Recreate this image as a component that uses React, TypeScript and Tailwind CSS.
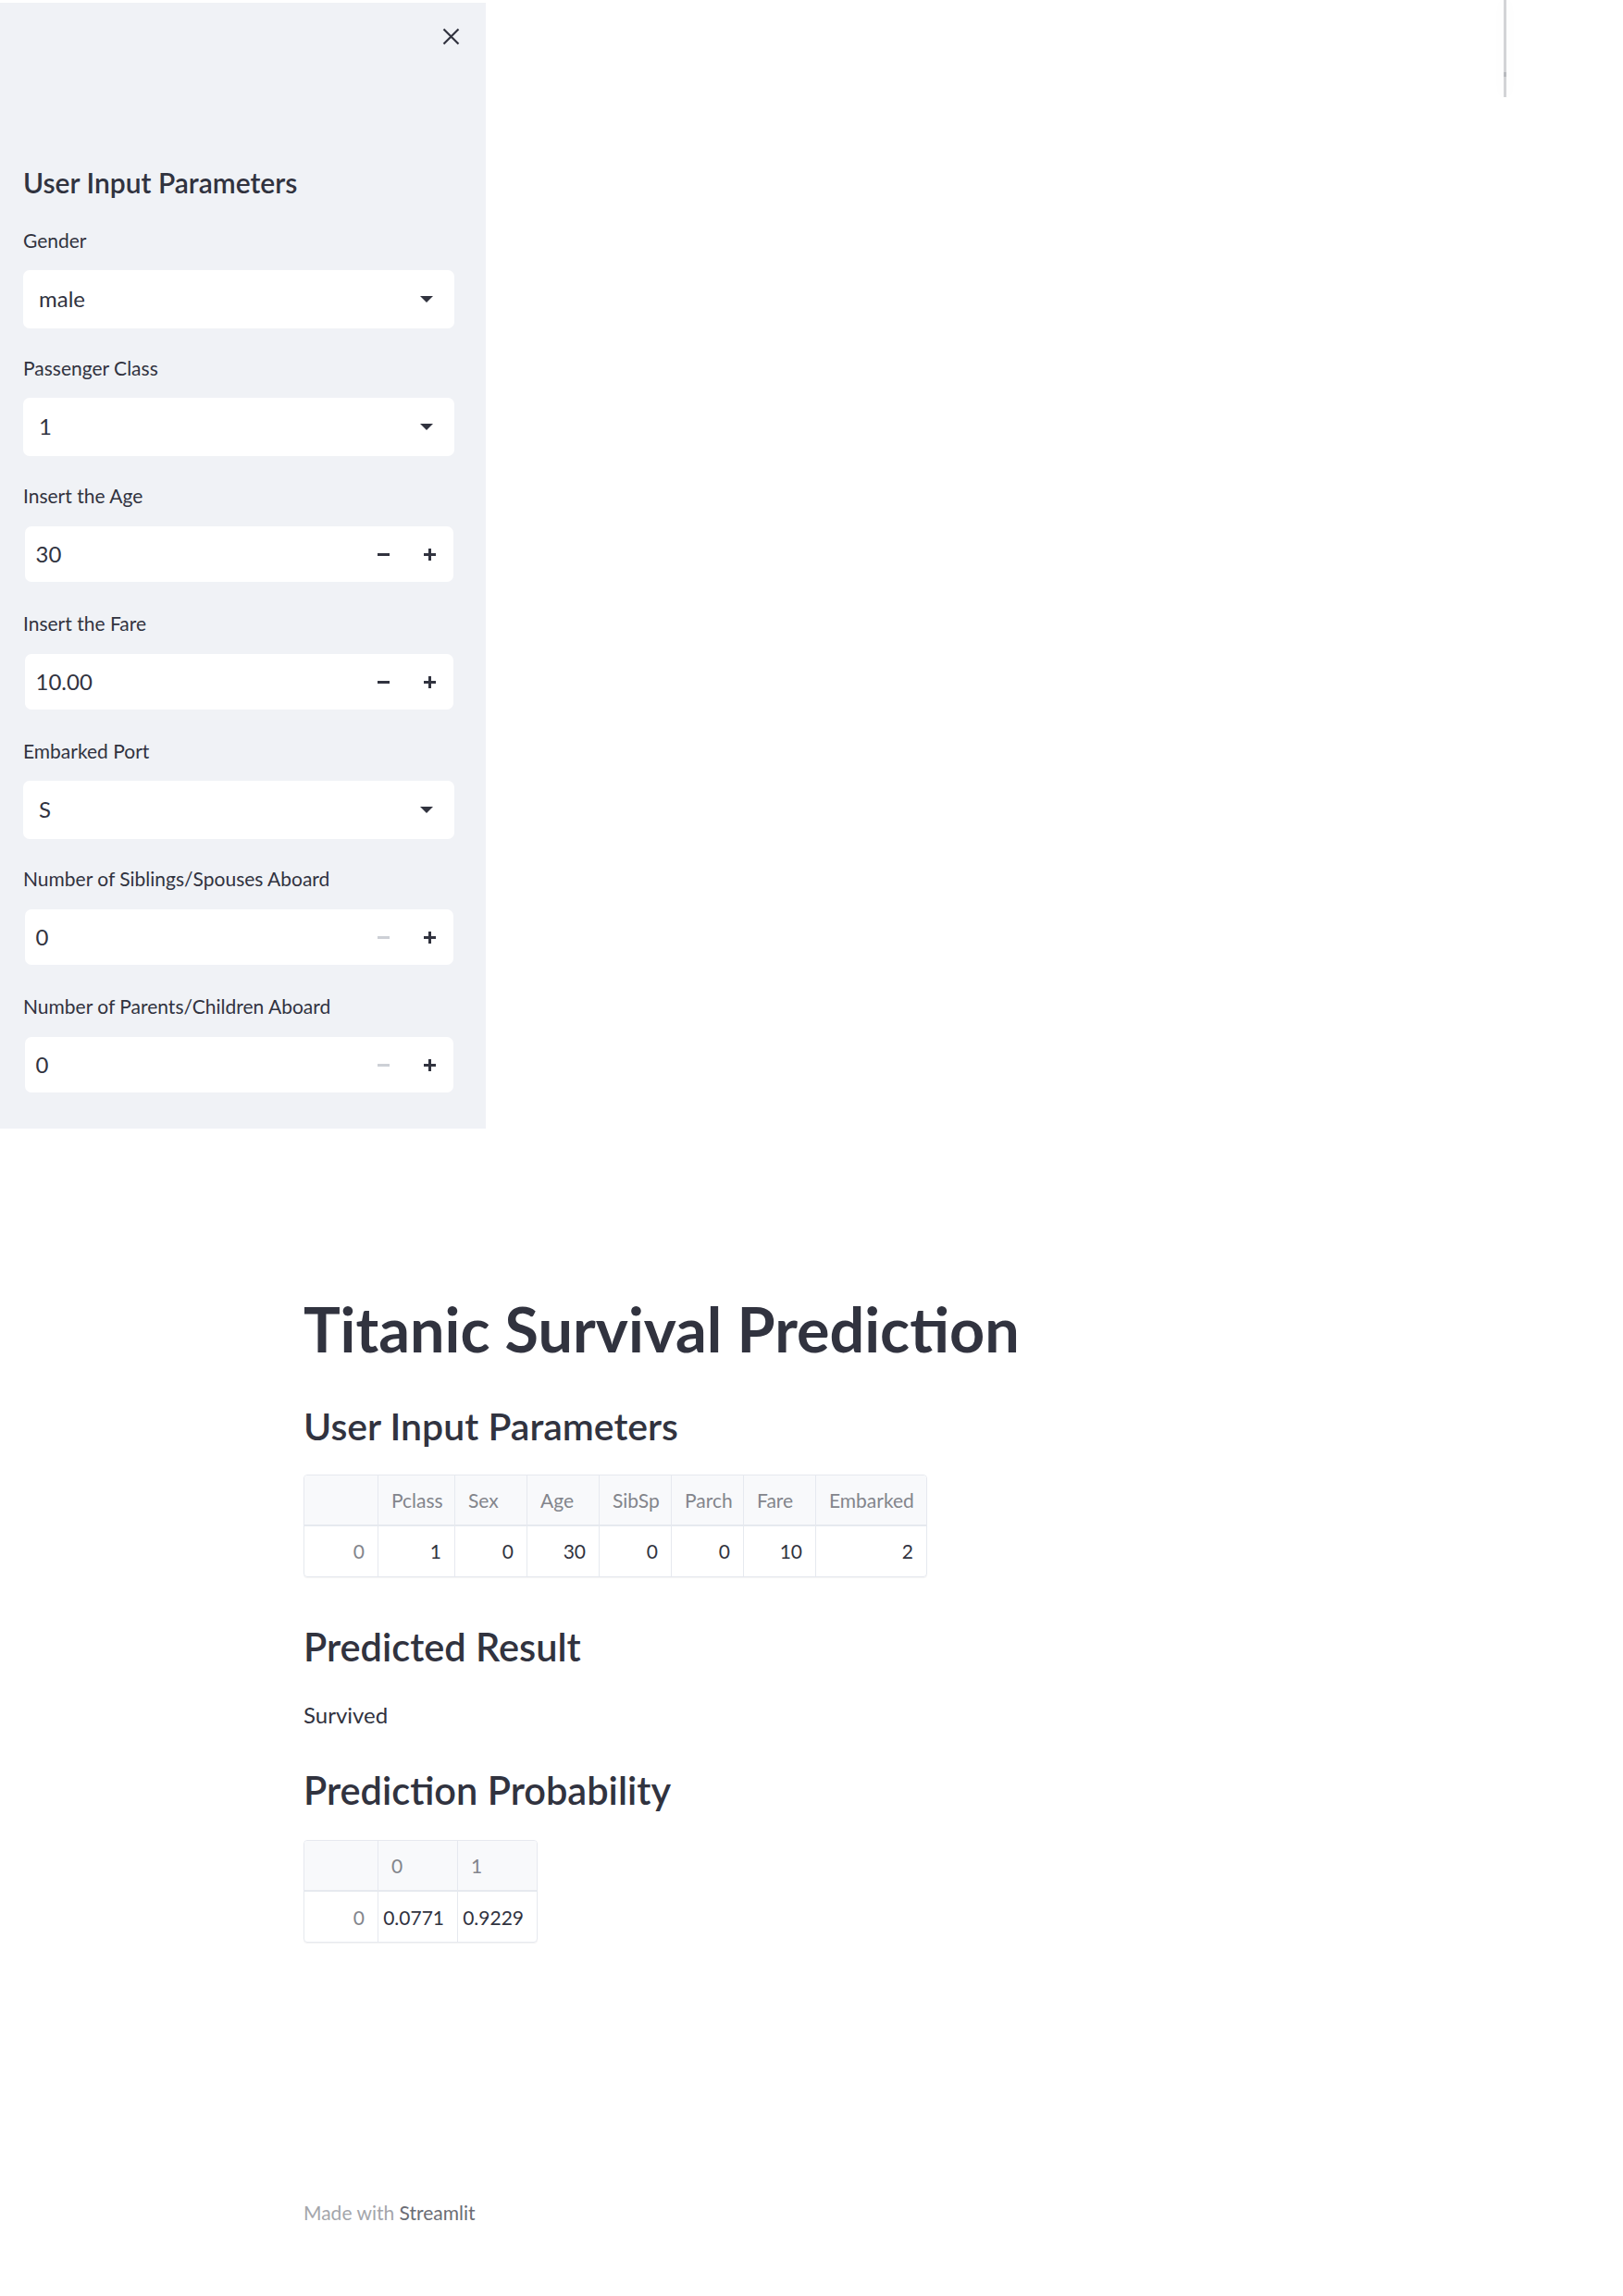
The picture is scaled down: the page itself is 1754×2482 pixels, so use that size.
import React from "react";

function CloseIcon() {
  return (
    <svg width="19" height="19" viewBox="0 0 19 19" fill="none">
      <path d="M1.5 1.5L17.5 17.5M17.5 1.5L1.5 17.5" stroke="#31333f" strokeWidth="2.2" />
    </svg>
  );
}

function Caret() {
  return (
    <svg width="14" height="7" viewBox="0 0 14 7">
      <path d="M0 0H14L7 7Z" fill="#31333f" />
    </svg>
  );
}

function Minus({ disabled }: { disabled?: boolean }) {
  return (
    <svg width="13" height="13" viewBox="0 0 13 13">
      <rect x="0" y="5" width="13" height="3" fill={disabled ? "#cdd0d6" : "#31333f"} />
    </svg>
  );
}

function Plus() {
  return (
    <svg width="13" height="13" viewBox="0 0 13 13">
      <rect x="0" y="5" width="13" height="3" fill="#31333f" />
      <rect x="5" y="0" width="3" height="13" fill="#31333f" />
    </svg>
  );
}

function Label({ children }: { children: React.ReactNode }) {
  return <div className="text-[21px] leading-[1.2] h-[25px] whitespace-nowrap">{children}</div>;
}

function SelectField({ label, value }: { label: string; value: string }) {
  return (
    <div className="flex flex-col">
      <Label>{label}</Label>
      <div className="mt-[19.5px] h-[63px] bg-white rounded-[7px] flex items-center justify-between pl-[17px] pr-[23px]">
        <span className="text-[24px] leading-none">{value}</span>
        <Caret />
      </div>
    </div>
  );
}

function NumberField({ label, value, minusDisabled }: { label: string; value: string; minusDisabled?: boolean }) {
  return (
    <div className="flex flex-col">
      <Label>{label}</Label>
      <div className="mt-[19.5px] h-[63px] p-[1.5px]">
        <div className="h-full bg-white rounded-[7px] flex items-center">
          <span className="flex-1 pl-[12px] text-[24px] leading-none">{value}</span>
          <div className="w-[50px] h-full flex items-center justify-center">
            <Minus disabled={minusDisabled} />
          </div>
          <div className="w-[50px] h-full flex items-center justify-center">
            <Plus />
          </div>
        </div>
      </div>
    </div>
  );
}

function HeadCell({ children, last }: { children?: React.ReactNode; last?: boolean }) {
  return (
    <div
      className={
        last
          ? "h-[55px] bg-[#f8f9fb] border-b-2 border-[#e6e9ef] flex items-center pl-[14px] text-[#83858c]"
          : "h-[55px] bg-[#f8f9fb] border-b-2 border-r border-[#e6e9ef] flex items-center pl-[14px] text-[#83858c]"
      }
    >
      {children}
    </div>
  );
}

function BodyCell({ children, last, index }: { children?: React.ReactNode; last?: boolean; index?: boolean }) {
  return (
    <div
      className={
        (last
          ? "h-[54px] flex items-center justify-end pr-[14px] "
          : "h-[54px] border-r border-[#e6e9ef] flex items-center justify-end pr-[14px] ") +
        (index ? "text-[#83858c]" : "text-[#31333f]")
      }
    >
      {children}
    </div>
  );
}

function InputTable() {
  const heads = ["Pclass", "Sex", "Age", "SibSp", "Parch", "Fare", "Embarked"];
  const vals = ["1", "0", "30", "0", "0", "10", "2"];
  return (
    <div className="w-fit border border-[#e6e9ef] rounded-[4px] overflow-hidden shadow-[0_1px_1px_rgba(0,0,0,0.05)] text-[21px] leading-none">
      <div className="grid grid-cols-[80px_83px_78px_78px_78px_78px_78px_119px]">
        <HeadCell />
        {heads.map((h, i) => (
          <HeadCell key={h} last={i === heads.length - 1}>
            {h}
          </HeadCell>
        ))}
        <BodyCell index>0</BodyCell>
        {vals.map((v, i) => (
          <BodyCell key={i} last={i === vals.length - 1}>
            {v}
          </BodyCell>
        ))}
      </div>
    </div>
  );
}

function ProbTable() {
  return (
    <div className="w-fit border border-[#e6e9ef] rounded-[4px] overflow-hidden shadow-[0_1px_1px_rgba(0,0,0,0.05)] text-[21px] leading-none">
      <div className="grid grid-cols-[80px_86px_85px]">
        <HeadCell />
        <HeadCell>0</HeadCell>
        <HeadCell last>1</HeadCell>
        <BodyCell index>0</BodyCell>
        <BodyCell>0.0771</BodyCell>
        <BodyCell last>0.9229</BodyCell>
      </div>
    </div>
  );
}

export default function App() {
  return (
    <div className="relative w-[1754px] h-[2482px] bg-white overflow-hidden font-['Lato',sans-serif] text-[#31333f]">
      {/* Main content */}
      <div className="w-[1098px] mx-auto pt-[1397px]">
        <h1 className="text-[66.5px] font-bold leading-[1.2] whitespace-nowrap">Titanic Survival Prediction</h1>
        <h3 className="mt-[40px] text-[41px] font-semibold leading-[1.2]">User Input Parameters</h3>
        <div className="mt-[28px]">
          <InputTable />
        </div>
        <h3 className="mt-[51px] text-[41.5px] font-semibold leading-[1.2]">Predicted Result</h3>
        <p className="mt-[34px] text-[24px] leading-[1.2]">Survived</p>
        <h3 className="mt-[42px] text-[41.5px] font-semibold leading-[1.2]">Prediction Probability</h3>
        <div className="mt-[29px]">
          <ProbTable />
        </div>
        <div className="mt-[279px] text-[21px] leading-[1.2] text-[#a4a6ab]">
          Made with <span className="text-[#6b6d75]">Streamlit</span>
        </div>
      </div>

      {/* Sidebar overlay */}
      <aside className="absolute left-0 top-[3px] w-[525px] h-[1217px] bg-[#f0f2f6]">
        <div className="flex justify-end pt-[27px] pr-[28px]">
          <CloseIcon />
        </div>
        <div className="pl-[25px] pr-[34px]">
          <h2 className="mt-[130px] text-[30px] font-semibold leading-[1.2] whitespace-nowrap">User Input Parameters</h2>
          <div className="mt-[32px] flex flex-col gap-[30.5px]">
            <SelectField label="Gender" value="male" />
            <SelectField label="Passenger Class" value="1" />
            <NumberField label="Insert the Age" value="30" />
            <NumberField label="Insert the Fare" value="10.00" />
            <SelectField label="Embarked Port" value="S" />
            <NumberField label="Number of Siblings/Spouses Aboard" value="0" minusDisabled />
            <NumberField label="Number of Parents/Children Aboard" value="0" minusDisabled />
          </div>
        </div>
      </aside>

      {/* Top-right toolbar edge */}
      <div className="absolute left-[1625px] top-0 w-[3px] h-[105px] bg-[#d3d4d7] shadow-[0_0_14px_rgba(0,0,0,0.05)]">
        <div className="mt-[78px] h-[5px] bg-[#b9bbbf]" />
      </div>
    </div>
  );
}
